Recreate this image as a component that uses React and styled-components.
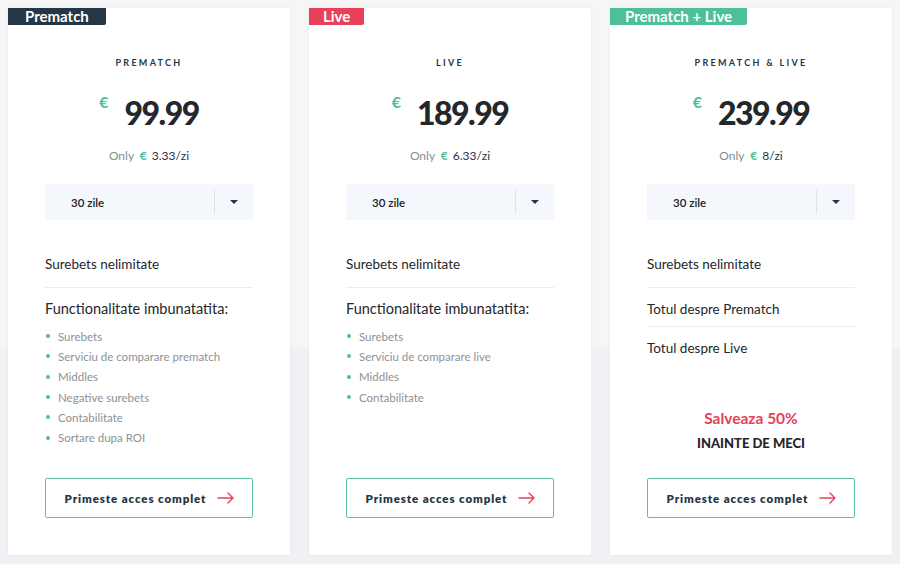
import React from "react";
import styled, { createGlobalStyle } from "styled-components";

const GlobalStyle = createGlobalStyle`
  html, body {
    margin: 0;
    padding: 0;
  }
  body {
    width: 900px;
    height: 564px;
    overflow: hidden;
    font-family: "Lato", "Noto Sans", sans-serif;
    background: linear-gradient(180deg, #f6f6f6 0, #f6f6f6 346px, #eff1f4 350px, #eff1f4 100%);
  }
`;

const Plans = styled.div`
  display: flex;
  gap: 19px;
  padding: 8px 8px 0;
`;

const Card = styled.div`
  position: relative;
  width: 282px;
  height: 547px;
  box-sizing: border-box;
  padding: 0 37px 37px 37px;
  background: #fff;
  border-radius: 2px;
  box-shadow: 0 0 3px rgba(40, 50, 70, 0.06);
  display: flex;
  flex-direction: column;
`;

const Badge = styled.div`
  position: absolute;
  top: 0;
  left: 0;
  height: 17px;
  padding: 0 ${p => p.$pad}px;
  line-height: 16px;
  font-size: 15px;
  font-weight: 700;
  color: #fff;
  background: ${p => p.$bg};
  border-radius: 0 0 2px 0;
`;

const PlanName = styled.div`
  margin-top: 49px;
  text-align: center;
  font-size: 9px;
  font-weight: 700;
  letter-spacing: 2.3px;
  color: #253746;
  line-height: 12px;
`;

const PriceRow = styled.div`
  margin-top: 22px;
  display: flex;
  justify-content: center;
  align-items: flex-start;
  gap: 16px;
  height: 44px;
`;

const Euro = styled.span`
  color: #4dbf9a;
  font-size: 16px;
  font-weight: 700;
  line-height: 16px;
  margin-top: 3px;
`;

const Amount = styled.span`
  font-size: 32px;
  font-weight: 900;
  color: #23262b;
  line-height: 44px;
  letter-spacing: -1.5px;
`;

const PerDay = styled.div`
  margin-top: 14px;
  text-align: center;
  font-size: 12px;
  color: #8a8d92;
  line-height: 14px;
  span.eur {
    color: #4dbf9a;
    font-weight: 700;
    margin: 0 5px 0 3px;
  }
  span.val {
    color: #2a3447;
  }
`;

const Select = styled.div`
  margin-top: 21px;
  height: 36px;
  background: #f4f8fc;
  display: flex;
  align-items: center;
  font-size: 11.5px;
  color: #222;
  font-weight: 600;
`;

const SelectLabel = styled.div`
  flex: 1;
  padding-left: 26px;
`;

const SelectDivider = styled.div`
  width: 1px;
  height: 24px;
  background: #dde3ea;
`;

const Caret = styled.div`
  width: 38px;
  display: flex;
  justify-content: center;
  &::after {
    content: "";
    border-left: 4px solid transparent;
    border-right: 4px solid transparent;
    border-top: 4px solid #253746;
  }
`;

const Feature = styled.div`
  font-size: 13.5px;
  color: #23262b;
  line-height: 18px;
  padding: ${p => (p.$first ? "35px 0 14px" : "12px 0 8px")};
  border-bottom: ${p => (p.$line ? "1.5px solid #ececec" : "none")};
`;

const SubTitle = styled.div`
  margin-top: 12px;
  font-size: 14.5px;
  color: #23262b;
  line-height: 18px;
`;

const List = styled.ul`
  list-style: none;
  margin: 8px 0 0;
  padding: 0;
`;

const Item = styled.li`
  display: flex;
  align-items: center;
  height: 20.3px;
  font-size: 11.5px;
  color: #8e9196;
  &::before {
    content: "";
    width: 4px;
    height: 4px;
    border-radius: 50%;
    background: #4dbf9a;
    margin: 0 8px 0 1px;
  }
`;

const Promo = styled.div`
  margin-top: 43px;
  text-align: center;
`;

const Save = styled.div`
  color: #e8405a;
  font-size: 15.5px;
  font-weight: 700;
  line-height: 20px;
`;

const Before = styled.div`
  margin-top: 6px;
  color: #23262b;
  font-size: 13px;
  font-weight: 900;
  line-height: 18px;
`;

const Button = styled.div`
  margin-top: auto;
  height: 40px;
  box-sizing: border-box;
  border: 1.5px solid #5ebf9f;
  border-radius: 2px;
  display: flex;
  align-items: center;
  justify-content: center;
  gap: 11px;
  font-size: 11.5px;
  font-weight: 800;
  letter-spacing: 0.9px;
  color: #253746;
  padding-left: 2px;
`;

const Arrow = () => (
  <svg width="18" height="12" viewBox="0 0 18 12" fill="none">
    <path d="M1 6h15M11 1l5 5-5 5" stroke="#e8405a" strokeWidth="1.4" strokeLinecap="round" strokeLinejoin="round" />
  </svg>
);

const plans = [
  {
    badge: "Prematch",
    badgeBg: "#253746",
    badgePad: 17,
    name: "PREMATCH",
    price: "99.99",
    perDay: "3.33",
    features: ["Surebets", "Serviciu de comparare prematch", "Middles", "Negative surebets", "Contabilitate", "Sortare dupa ROI"]
  },
  {
    badge: "Live",
    badgeBg: "#e8405a",
    badgePad: 14,
    name: "LIVE",
    price: "189.99",
    perDay: "6.33",
    features: ["Surebets", "Serviciu de comparare live", "Middles", "Contabilitate"]
  },
  {
    badge: "Prematch + Live",
    badgeBg: "#4dbf9a",
    badgePad: 15,
    name: "PREMATCH & LIVE",
    price: "239.99",
    perDay: "8",
    combo: true
  }
];

function PlanCard({ plan }) {
  return (
    <Card>
      <Badge $bg={plan.badgeBg} $pad={plan.badgePad}>{plan.badge}</Badge>
      <PlanName>{plan.name}</PlanName>
      <PriceRow>
        <Euro>€</Euro>
        <Amount>{plan.price}</Amount>
      </PriceRow>
      <PerDay>
        Only <span className="eur">€</span>
        <span className="val">{plan.perDay}/zi</span>
      </PerDay>
      <Select>
        <SelectLabel>30 zile</SelectLabel>
        <SelectDivider />
        <Caret />
      </Select>
      <Feature $first $line>Surebets nelimitate</Feature>
      {plan.combo ? (
        <>
          <Feature $line>Totul despre Prematch</Feature>
          <Feature>Totul despre Live</Feature>
          <Promo>
            <Save>Salveaza 50%</Save>
            <Before>INAINTE DE MECI</Before>
          </Promo>
        </>
      ) : (
        <>
          <SubTitle>Functionalitate imbunatatita:</SubTitle>
          <List>
            {plan.features.map(f => (
              <Item key={f}>{f}</Item>
            ))}
          </List>
        </>
      )}
      <Button>
        Primeste acces complet
        <Arrow />
      </Button>
    </Card>
  );
}

export default function App() {
  return (
    <>
      <GlobalStyle />
      <Plans>
        {plans.map(p => (
          <PlanCard key={p.name} plan={p} />
        ))}
      </Plans>
    </>
  );
}
